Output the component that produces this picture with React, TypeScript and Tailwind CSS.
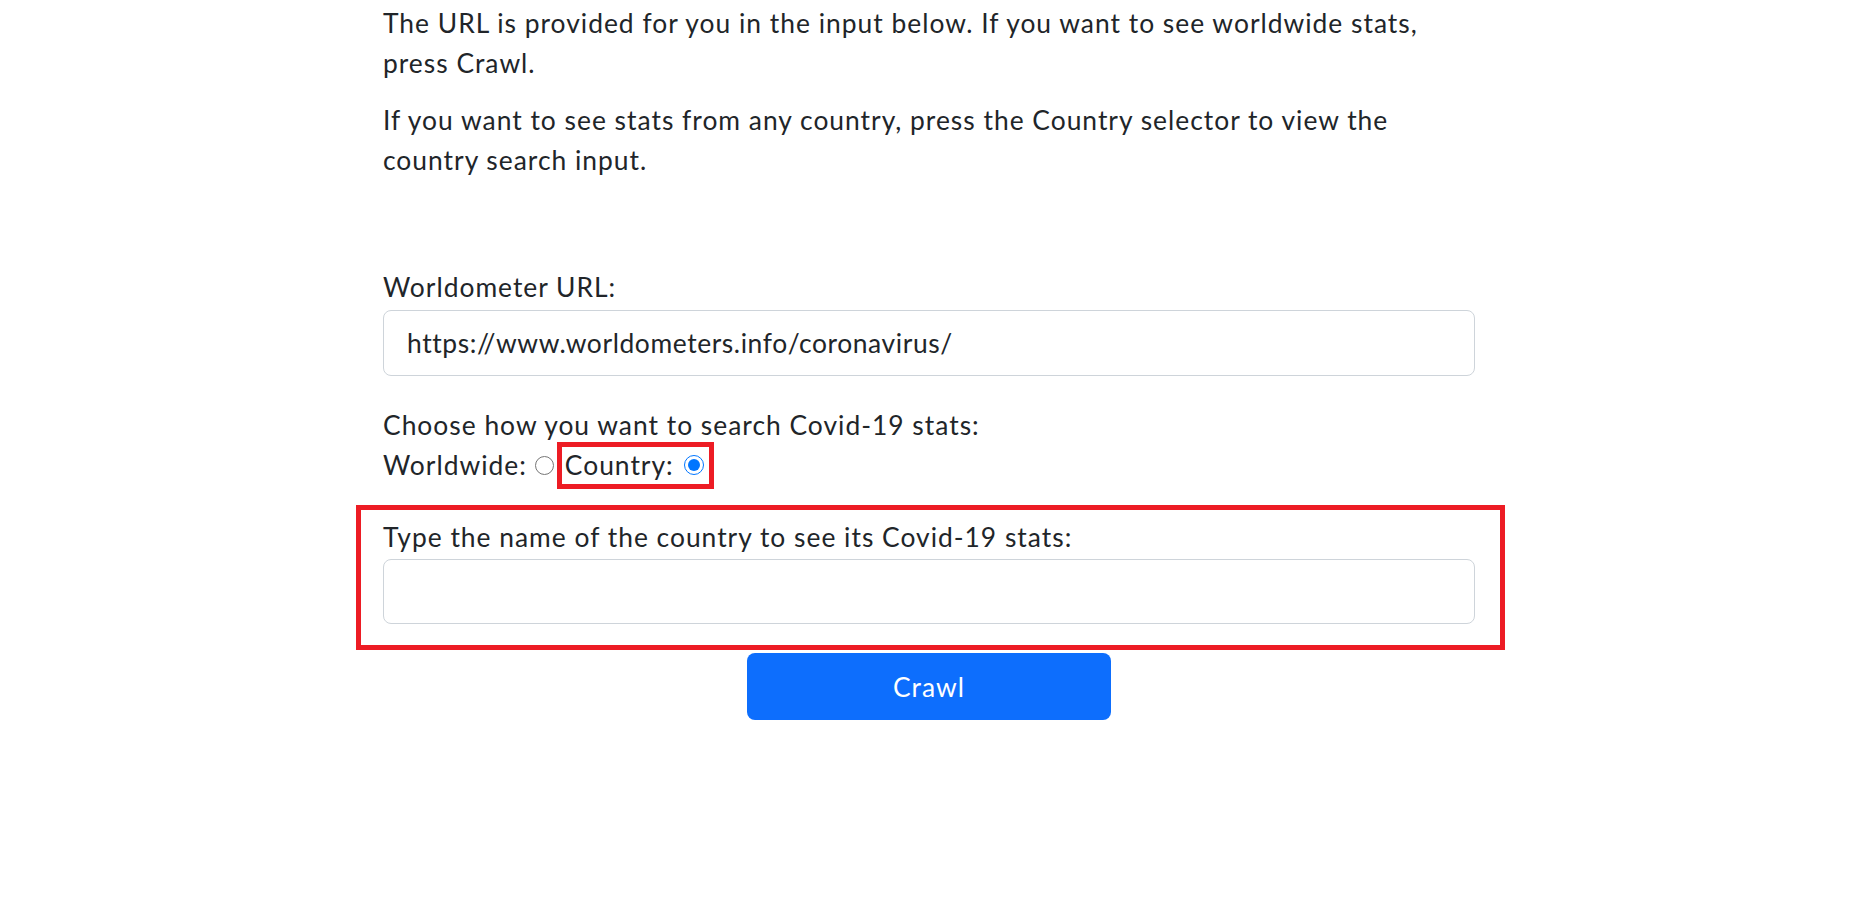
export default function App() {
  return (
    <div className="min-h-[918px] w-full bg-white font-['Lato',_'Liberation_Sans',_sans-serif] text-[26.4px] leading-[40px] tracking-[1px] text-[#212529]">
      <div className="mx-auto w-[1092px] pt-[3px]">
        <p className="mb-[17px]">
          The URL is provided for you in the input below. If you want to see worldwide stats, press Crawl.
        </p>
        <p>
          If you want to see stats from any country, press the Country selector to view the country search input.
        </p>

        <label className="mt-[87px] block">Worldometer URL:</label>
        <input
          type="text"
          defaultValue="https://www.worldometers.info/coronavirus/"
          className="mt-[3px] block h-[66px] w-full rounded-[8px] border border-[#ced4da] px-[23px] text-[26.4px] tracking-[0.6px] text-[#212529] outline-none"
        />

        <div className="mt-[29px]">Choose how you want to search Covid-19 stats:</div>
        <div>
          Worldwide:
          <input type="radio" name="mode" className="ml-[8px] mr-[3px] h-[19px] w-[19px] align-baseline" />
          <span className="-my-[4px] inline-block border-[5px] border-[#ed1c24] pl-[3px] pr-[5px] leading-[37px]">
            Country:
            <input type="radio" name="mode" defaultChecked className="ml-[10px] h-[20px] w-[20px] align-baseline" />
          </span>
        </div>

        <div className="mt-[20px] -ml-[27px] -mr-[30px] border-[5px] border-[#ed1c24] pb-[21px] pl-[22px] pr-[25px] pt-[7px]">
          <label className="block">Type the name of the country to see its Covid-19 stats:</label>
          <input
            type="text"
            className="mt-[2px] block h-[65px] w-full rounded-[8px] border border-[#ced4da] px-[23px] text-[26.4px] outline-none"
          />
        </div>

        <div className="mt-[3px] flex justify-center">
          <button className="h-[67px] w-[364px] rounded-[8px] bg-[#0d6efd] text-[26.4px] tracking-[1px] text-white">Crawl</button>
        </div>
      </div>
    </div>
  );
}
